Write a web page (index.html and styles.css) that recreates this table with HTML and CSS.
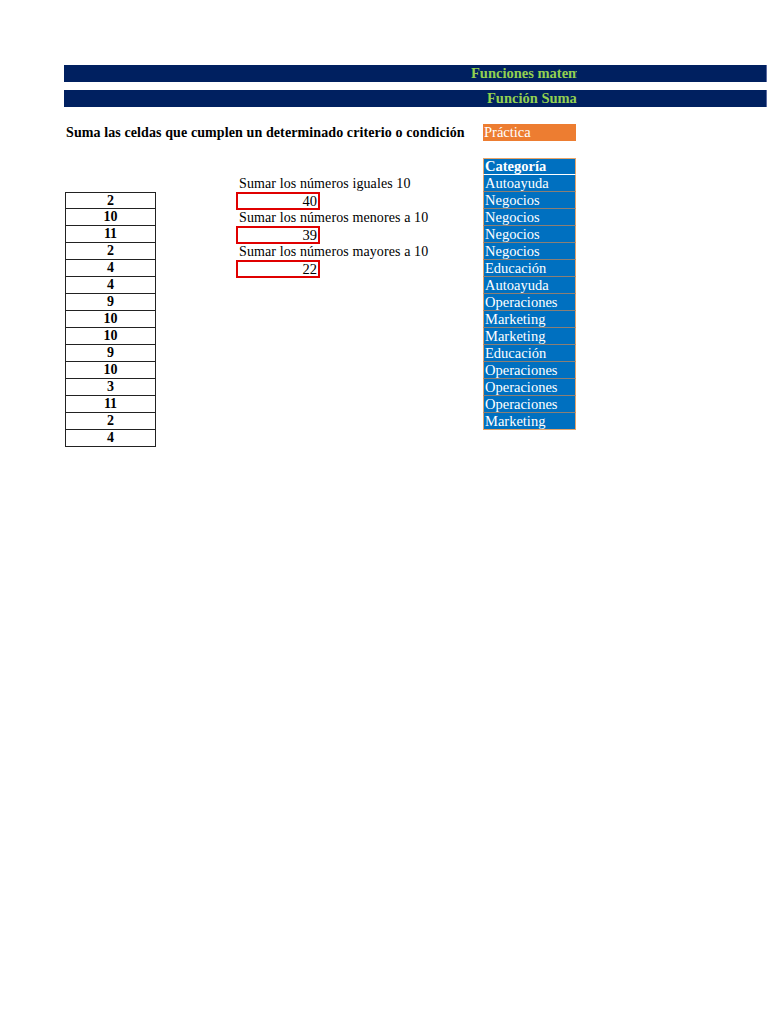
FILE: index.html
```html
<!DOCTYPE html>
<html lang="es">
<head>
<meta charset="utf-8">
<title>Función Sumar.si</title>
<link rel="stylesheet" href="styles.css">
</head>
<body>
<div class="page">
  <div class="banners">
    <div class="banner"><div class="banner-clip"><span class="banner-text t1">Funciones matemáticas</span></div></div>
    <div class="banner"><div class="banner-clip"><span class="banner-text t2">Función Sumar.si</span></div></div>
  </div>

  <div class="sheet">
    <div class="subtitle">Suma las celdas que cumplen un determinado criterio o condición</div>
    <div class="practica">Práctica</div>

    <div class="cat head" style="grid-row:3">Categoría</div>
    <div class="cat" style="grid-row:4">Autoayuda</div>
    <div class="cat" style="grid-row:5">Negocios</div>
    <div class="cat" style="grid-row:6">Negocios</div>
    <div class="cat" style="grid-row:7">Negocios</div>
    <div class="cat" style="grid-row:8">Negocios</div>
    <div class="cat" style="grid-row:9">Educación</div>
    <div class="cat" style="grid-row:10">Autoayuda</div>
    <div class="cat" style="grid-row:11">Operaciones</div>
    <div class="cat" style="grid-row:12">Marketing</div>
    <div class="cat" style="grid-row:13">Marketing</div>
    <div class="cat" style="grid-row:14">Educación</div>
    <div class="cat" style="grid-row:15">Operaciones</div>
    <div class="cat" style="grid-row:16">Operaciones</div>
    <div class="cat" style="grid-row:17">Operaciones</div>
    <div class="cat last" style="grid-row:18">Marketing</div>

    <div class="num first" style="grid-row:5">2</div>
    <div class="num" style="grid-row:6">10</div>
    <div class="num" style="grid-row:7">11</div>
    <div class="num" style="grid-row:8">2</div>
    <div class="num" style="grid-row:9">4</div>
    <div class="num" style="grid-row:10">4</div>
    <div class="num" style="grid-row:11">9</div>
    <div class="num" style="grid-row:12">10</div>
    <div class="num" style="grid-row:13">10</div>
    <div class="num" style="grid-row:14">9</div>
    <div class="num" style="grid-row:15">10</div>
    <div class="num" style="grid-row:16">3</div>
    <div class="num" style="grid-row:17">11</div>
    <div class="num" style="grid-row:18">2</div>
    <div class="num" style="grid-row:19">4</div>

    <div class="label" style="grid-row:4">Sumar los números iguales 10</div>
    <div class="result" style="grid-row:5">40</div>
    <div class="label" style="grid-row:6">Sumar los números menores a 10</div>
    <div class="result" style="grid-row:7">39</div>
    <div class="label" style="grid-row:8">Sumar los números mayores a 10</div>
    <div class="result" style="grid-row:9">22</div>
  </div>
</div>
</body>
</html>
```

FILE: styles.css
```css
html, body {
  margin: 0;
  padding: 0;
  background: #ffffff;
}

body {
  font-family: "Liberation Serif", "Times New Roman", serif;
  color: #000000;
}

.page {
  width: 768px;
  height: 1024px;
  padding-top: 65px;
  box-sizing: border-box;
}

.banners {
  margin-left: 64px;
  width: 703px;
  display: flex;
  flex-direction: column;
  gap: 8px;
}

.banner {
  height: 17px;
  background: #002060;
  border-right: 1px solid #5a6aa0;
  box-sizing: border-box;
}

.banner-clip {
  width: 513px;
  height: 17px;
  overflow: hidden;
  white-space: nowrap;
}

.banner-text {
  display: block;
  color: #92d050;
  font-weight: bold;
  font-size: 14.5px;
  line-height: 17px;
}

.t1 { padding-left: 407px; }
.t2 { padding-left: 423px; }

.sheet {
  margin-top: 17px;
  margin-left: 65px;
  display: grid;
  grid-template-columns: 91px 81px 83px 163px 93px;
  grid-auto-rows: 17px;
}

.subtitle {
  grid-row: 1;
  grid-column: 1 / 5;
  font-weight: bold;
  font-size: 14px;
  letter-spacing: 0.1px;
  line-height: 17px;
  padding-left: 1px;
  white-space: nowrap;
}

.practica {
  grid-row: 1;
  grid-column: 5;
  background: #ed7d31;
  color: #ffffff;
  font-size: 14.5px;
  line-height: 17px;
  padding-left: 1px;
}

.cat {
  grid-column: 5;
  background: #0070c0;
  color: #ffffff;
  font-size: 14.5px;
  line-height: 16px;
  padding-left: 1px;
  border-bottom: 1px solid #8c7f74;
  border-left: 1px solid #e6a46a;
  border-right: 1px solid #e6a46a;
  white-space: nowrap;
  overflow: hidden;
}

.cat.head {
  font-weight: bold;
  border-top: 1px solid #e6a46a;
  line-height: 15px;
  border-bottom: 1px solid #ffffff;
}

.cat.last {
  border-bottom: 1px solid #e6a46a;
}

.num {
  grid-column: 1;
  border: 1px solid #222222;
  border-top: none;
  font-weight: bold;
  font-size: 14px;
  line-height: 16px;
  text-align: center;
}

.num.first {
  border-top: 1px solid #222222;
  line-height: 15px;
}

.label {
  grid-column: 3 / 5;
  font-size: 14px;
  letter-spacing: 0.1px;
  line-height: 17px;
  padding-left: 2px;
  white-space: nowrap;
}

.result {
  grid-column: 3;
  border: 2px solid #e00000;
  font-size: 14.5px;
  line-height: 14px;
  text-align: right;
  padding-right: 1px;
  margin-left: -1px;
  height: 18px;
  box-sizing: border-box;
}
```
